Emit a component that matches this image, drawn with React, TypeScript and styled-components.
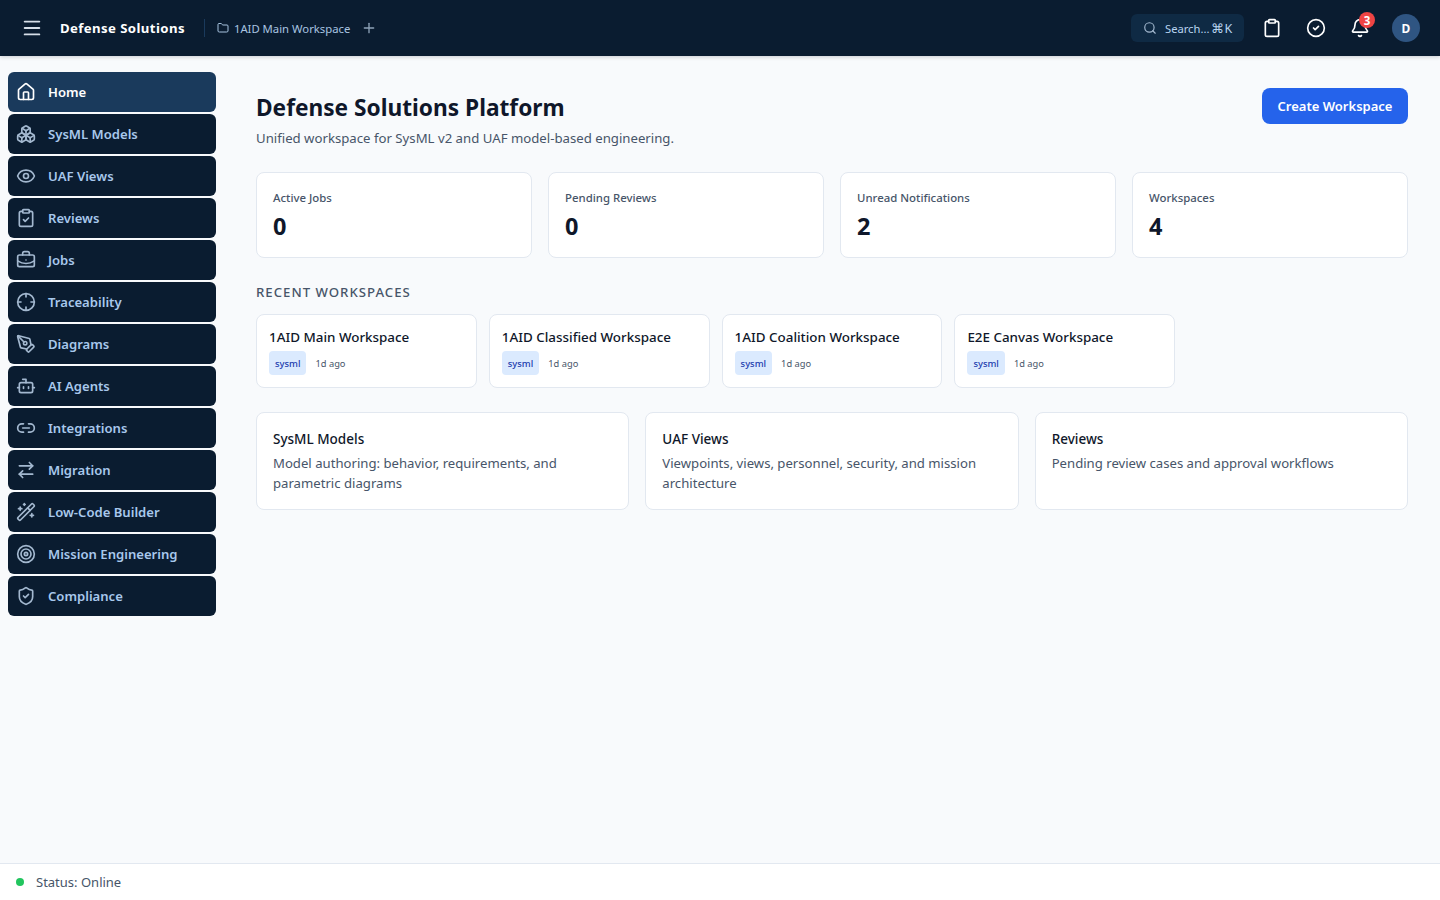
import styled, { createGlobalStyle } from 'styled-components';
import {
  Bell,
  Boxes,
  BriefcaseBusiness,
  CircleCheck,
  Clipboard,
  ClipboardCheck,
  Crosshair,
  Eye,
  Folder,
  House,
  Link2,
  Menu,
  ArrowRightLeft,
  PenTool,
  Plus,
  Bot,
  Search,
  ShieldCheck,
  Target,
  WandSparkles,
} from 'lucide-react';

const GlobalStyle = createGlobalStyle`
  * {
    box-sizing: border-box;
  }
  body {
    margin: 0;
    background: #f8fafc;
    font-family: "Noto Sans", sans-serif;
    color: #0f172a;
  }
`;

const Page = styled.div`
  height: 900px;
  display: flex;
  flex-direction: column;
  overflow: hidden;
`;

const TopBar = styled.header`
  height: 56px;
  flex-shrink: 0;
  display: flex;
  align-items: center;
  padding: 0 20px 0 21px;
  background: #0a1c30;
  box-shadow: 0 1px 4px rgba(15, 23, 42, 0.2);
  position: relative;
  z-index: 1;
`;

const MenuButton = styled.div`
  width: 22px;
  height: 22px;
  display: flex;
  align-items: center;
  justify-content: center;
  color: #d6dee8;
  margin-right: 17px;
`;

const Brand = styled.div`
  font-size: 13.2px;
  font-weight: 700;
  letter-spacing: 0.4px;
  color: #ffffff;
  white-space: nowrap;
`;

const Divider = styled.div`
  width: 1px;
  height: 18px;
  background: #1a3a5c;
  margin: 0 12px 0 19px;
`;

const WorkspaceTab = styled.div`
  display: flex;
  align-items: center;
  gap: 5px;
  font-size: 11.3px;
  color: #a8c4e0;
`;

const AddTab = styled.div`
  display: flex;
  color: #8ea3b8;
  margin-left: 11px;
`;

const TopRight = styled.div`
  margin-left: auto;
  display: flex;
  align-items: center;
`;

const SearchBox = styled.div`
  width: 113px;
  height: 28px;
  margin-right: 14px;
  border-radius: 6px;
  background: #0f2a44;
  display: flex;
  align-items: center;
  gap: 8px;
  padding-left: 12px;
  color: #b8d4f0;
  font-size: 11.2px;
  white-space: nowrap;
  svg {
    color: #a3b8cf;
  }
`;

const ShortcutHint = styled.span`
  font-size: 12.5px;
  margin-left: 2px;
`;

const IconButton = styled.div`
  width: 28px;
  height: 28px;
  margin-right: 16px;
  display: flex;
  align-items: center;
  justify-content: center;
  color: #ffffff;
  position: relative;
`;

const Badge = styled.span`
  position: absolute;
  top: -2px;
  right: -1px;
  width: 16px;
  height: 16px;
  border-radius: 50%;
  background: #ef4444;
  color: #ffffff;
  font-size: 11.5px;
  font-weight: 700;
  display: flex;
  align-items: center;
  justify-content: center;
`;

const Avatar = styled.div`
  width: 28px;
  height: 28px;
  margin-left: 2px;
  border-radius: 50%;
  background: #2f5582;
  color: #ffffff;
  font-size: 12px;
  font-weight: 700;
  display: flex;
  align-items: center;
  justify-content: center;
`;

const Body = styled.div`
  flex: 1;
  display: flex;
  min-height: 0;
`;

const Sidebar = styled.nav`
  width: 224px;
  flex-shrink: 0;
  padding: 16px 8px;
  display: flex;
  flex-direction: column;
  gap: 2px;
`;

const NavItem = styled.div<{ $active?: boolean }>`
  height: 40px;
  border-radius: 6px;
  display: flex;
  align-items: center;
  gap: 12px;
  padding: 0 8px 1px;
  background: ${(props) => (props.$active ? '#1a3a5c' : '#0a1c30')};
  color: ${(props) => (props.$active ? '#ffffff' : '#a8c8ec')};
  font-size: 13.1px;
  font-weight: 600;
  svg {
    flex-shrink: 0;
    color: ${(props) => (props.$active ? '#ffffff' : '#a3b8cf')};
  }
`;

const Main = styled.main`
  flex: 1;
  padding: 32px 32px 0;
  min-width: 0;
`;

const HeadRow = styled.div`
  display: flex;
  justify-content: space-between;
  align-items: flex-start;
  margin-bottom: 24px;
`;

const Title = styled.h1`
  margin: 0;
  font-size: 22.7px;
  line-height: 40px;
  font-weight: 700;
  color: #0f172a;
`;

const Subtitle = styled.p`
  margin: 0;
  font-size: 13.2px;
  line-height: 20px;
  color: #475569;
`;

const CreateButton = styled.button`
  width: 146px;
  height: 36px;
  padding: 0;
  border: 0;
  border-radius: 8px;
  background: #2563eb;
  color: #ffffff;
  font-family: inherit;
  font-size: 13px;
  font-weight: 600;
`;

const StatGrid = styled.div`
  display: grid;
  grid-template-columns: repeat(4, 1fr);
  gap: 16px;
  margin-bottom: 24px;
`;

const Card = styled.div`
  background: #ffffff;
  border: 1px solid #e2e8f0;
  border-radius: 8px;
`;

const StatCard = styled(Card)`
  height: 86px;
  padding: 16px;
`;

const StatLabel = styled.div`
  font-size: 11.4px;
  line-height: 18px;
  font-weight: 500;
  color: #475569;
  margin-bottom: 1px;
`;

const StatValue = styled.div`
  font-size: 23.5px;
  line-height: 36px;
  font-weight: 700;
  color: #0f172a;
`;

const SectionLabel = styled.h2`
  margin: 0 0 12px;
  font-size: 13.2px;
  line-height: 20px;
  font-weight: 500;
  letter-spacing: 1px;
  text-transform: uppercase;
  color: #475569;
`;

const RecentGrid = styled.div`
  display: grid;
  grid-template-columns: repeat(5, 1fr);
  gap: 12px;
  margin-bottom: 24px;
`;

const RecentCard = styled(Card)`
  height: 74px;
  padding: 12px;
`;

const RecentName = styled.div`
  font-size: 13.4px;
  line-height: 20px;
  font-weight: 500;
  color: #0f172a;
  margin-bottom: 4px;
`;

const MetaRow = styled.div`
  display: flex;
  align-items: center;
  gap: 9px;
`;

const Tag = styled.span`
  height: 24px;
  padding: 0 6px;
  border-radius: 4px;
  background: #dbeafe;
  color: #1e40af;
  font-size: 9.4px;
  font-weight: 500;
  display: flex;
  align-items: center;
`;

const MetaText = styled.span`
  font-size: 9.3px;
  color: #475569;
`;

const FeatureGrid = styled.div`
  display: grid;
  grid-template-columns: repeat(3, 1fr);
  gap: 16px;
`;

const FeatureCard = styled(Card)`
  height: 98px;
  padding: 16px;
`;

const FeatureTitle = styled.div`
  font-size: 13.5px;
  line-height: 20px;
  font-weight: 500;
  color: #0f172a;
  margin-bottom: 4px;
`;

const FeatureText = styled.div`
  font-size: 13.15px;
  line-height: 20px;
  color: #475569;
`;

const StatusBar = styled.footer`
  height: 37px;
  flex-shrink: 0;
  display: flex;
  align-items: center;
  gap: 12px;
  padding: 0 16px 1px;
  background: #ffffff;
  border-top: 1px solid #e2e8f0;
  font-size: 13px;
  color: #475569;
`;

const StatusDot = styled.span`
  width: 8px;
  height: 8px;
  border-radius: 50%;
  background: #22c55e;
`;

const navItems = [
  { label: 'Home', icon: House },
  { label: 'SysML Models', icon: Boxes },
  { label: 'UAF Views', icon: Eye },
  { label: 'Reviews', icon: ClipboardCheck },
  { label: 'Jobs', icon: BriefcaseBusiness },
  { label: 'Traceability', icon: Crosshair },
  { label: 'Diagrams', icon: PenTool },
  { label: 'AI Agents', icon: Bot },
  { label: 'Integrations', icon: Link2 },
  { label: 'Migration', icon: ArrowRightLeft },
  { label: 'Low-Code Builder', icon: WandSparkles },
  { label: 'Mission Engineering', icon: Target },
  { label: 'Compliance', icon: ShieldCheck },
];

const stats = [
  { label: 'Active Jobs', value: 0 },
  { label: 'Pending Reviews', value: 0 },
  { label: 'Unread Notifications', value: 2 },
  { label: 'Workspaces', value: 4 },
];

const recents = [
  '1AID Main Workspace',
  '1AID Classified Workspace',
  '1AID Coalition Workspace',
  'E2E Canvas Workspace',
];

const features = [
  {
    title: 'SysML Models',
    text: 'Model authoring: behavior, requirements, and parametric diagrams',
  },
  {
    title: 'UAF Views',
    text: 'Viewpoints, views, personnel, security, and mission architecture',
  },
  {
    title: 'Reviews',
    text: 'Pending review cases and approval workflows',
  },
];

function App() {
  return (
    <Page>
      <GlobalStyle />
      <TopBar>
        <MenuButton>
          <Menu size={22} />
        </MenuButton>
        <Brand>Defense Solutions</Brand>
        <Divider />
        <WorkspaceTab>
          <Folder size={12} />
          1AID Main Workspace
        </WorkspaceTab>
        <AddTab>
          <Plus size={16} />
        </AddTab>
        <TopRight>
          <SearchBox>
            <Search size={14} />
            <span>
              Search...<ShortcutHint>⌘K</ShortcutHint>
            </span>
          </SearchBox>
          <IconButton>
            <Clipboard size={20} />
          </IconButton>
          <IconButton>
            <CircleCheck size={20} />
          </IconButton>
          <IconButton>
            <Bell size={20} />
            <Badge>3</Badge>
          </IconButton>
          <Avatar>D</Avatar>
        </TopRight>
      </TopBar>
      <Body>
        <Sidebar>
          {navItems.map((item, index) => (
            <NavItem key={item.label} $active={index === 0}>
              <item.icon size={20} />
              {item.label}
            </NavItem>
          ))}
        </Sidebar>
        <Main>
          <HeadRow>
            <div>
              <Title>Defense Solutions Platform</Title>
              <Subtitle>Unified workspace for SysML v2 and UAF model-based engineering.</Subtitle>
            </div>
            <CreateButton>Create Workspace</CreateButton>
          </HeadRow>
          <StatGrid>
            {stats.map((stat) => (
              <StatCard key={stat.label}>
                <StatLabel>{stat.label}</StatLabel>
                <StatValue>{stat.value}</StatValue>
              </StatCard>
            ))}
          </StatGrid>
          <SectionLabel>Recent Workspaces</SectionLabel>
          <RecentGrid>
            {recents.map((name) => (
              <RecentCard key={name}>
                <RecentName>{name}</RecentName>
                <MetaRow>
                  <Tag>sysml</Tag>
                  <MetaText>1d ago</MetaText>
                </MetaRow>
              </RecentCard>
            ))}
          </RecentGrid>
          <FeatureGrid>
            {features.map((feature) => (
              <FeatureCard key={feature.title}>
                <FeatureTitle>{feature.title}</FeatureTitle>
                <FeatureText>{feature.text}</FeatureText>
              </FeatureCard>
            ))}
          </FeatureGrid>
        </Main>
      </Body>
      <StatusBar>
        <StatusDot />
        Status: Online
      </StatusBar>
    </Page>
  );
}

export default App;
